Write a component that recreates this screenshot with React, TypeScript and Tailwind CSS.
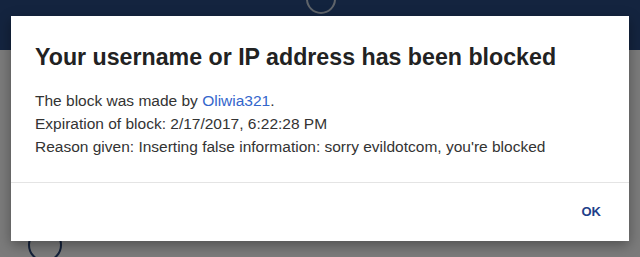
import React from "react";

const font = { fontFamily: '"Liberation Sans", Arial, sans-serif' };

export default function App() {
  return (
    <div className="relative w-[640px] h-[257px] overflow-hidden bg-[#7b7b7b]" style={font}>
      {/* page behind the overlay */}
      <div className="h-[50px] bg-[#14243f]" />
      <div className="absolute left-[306px] top-[-16px] w-[30px] h-[30px] rounded-full border-2 border-[#5f646a] bg-[#12233e]" />
      <div className="absolute left-[28px] top-[228px] w-[34px] h-[34px] rounded-full border-2 border-[#14213a]" />

      {/* dialog */}
      <div className="absolute left-[11px] top-[16px] w-[618px] h-[225px] bg-white shadow-[0_4px_12px_rgba(0,0,0,0.35)] flex flex-col">
        <div className="px-6 pt-[27px] h-[167px] border-b border-[#e4e4e4]">
          <h1 className="text-[23.2px] leading-[28px] font-bold text-[#222]">
            Your username or IP address has been blocked
          </h1>
          <div className="mt-[18px] text-[15.5px] leading-[23px] text-[#333]">
            <p>
              The block was made by <a className="text-[#3366cc]">Oliwia321</a>.
            </p>
            <p>Expiration of block: 2/17/2017, 6:22:28 PM</p>
            <p>Reason given: Inserting false information: sorry evildotcom, you're blocked</p>
          </div>
        </div>
        <div className="flex-1 flex items-center justify-end pr-[28px]">
          <button className="text-[13px] font-bold text-[#1f3f8a]">OK</button>
        </div>
      </div>
    </div>
  );
}
